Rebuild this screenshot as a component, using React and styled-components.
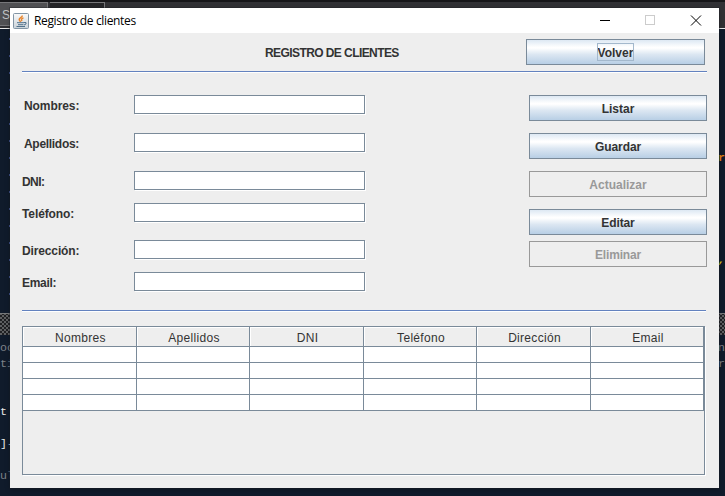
import React from "react";
import styled, { createGlobalStyle } from "styled-components";

const GlobalStyle = createGlobalStyle`
  * { box-sizing: border-box; }
  body { margin: 0; background: #101b2b; overflow: hidden; }
`;

const line = "#7a8a99";

const Desktop = styled.div`
  position: relative;
  width: 725px;
  height: 496px;
  padding: 8px 6px 8px 10px;
  overflow: hidden;
  background: #101b2b;
`;

const Editor = styled.div`
  position: absolute;
  inset: 0;
  font: 11.6px/16px "Liberation Mono", monospace;
`;

const TabStrip = styled.div`
  display: flex;
  height: 29px;
  padding-top: 2px;
  background: linear-gradient(#161619 0 2px, #313135 2px 28px, #e8e8e8 28px);
`;

const EditorTab = styled.div`
  width: ${(p) => p.$width}px;
  height: 24px;
  padding: 5px 2px;
  border: 1px solid #77777a;
  border-left: 0;
  margin-right: 2px;
  background: ${(p) => p.$fill};
  color: #c4c4c4;
  font: 12px/14px "Liberation Sans", sans-serif;
`;

const Splitter = styled.div`
  position: absolute;
  top: 313px;
  left: 0;
  right: 0;
  height: 22px;
  border-top: 1px solid #8a8a8a;
  background:
    conic-gradient(#222 25%, transparent 0) 0 3px / 4px 4px,
    conic-gradient(#222 25%, transparent 0) 2px 5px / 4px 4px,
    #6b6b6b;
  background-size: 4px 4px;
  opacity: 0.85;
`;

const Guide = styled.div`
  position: absolute;
  left: 9px;
  top: 38px;
  width: 1px;
  height: 265px;
  background: repeating-linear-gradient(#4a60a8 0 2px, transparent 2px 17px);
`;

const CodeScrap = styled.span`
  position: absolute;
  left: ${(p) => p.$x}px;
  top: ${(p) => p.$y}px;
  color: ${(p) => p.$color};
  font-style: ${(p) => (p.$italic ? "italic" : "normal")};
  font-weight: ${(p) => (p.$bold ? "bold" : "normal")};
  white-space: pre;
`;

const Window = styled.main`
  position: relative;
  width: 709px;
  height: 480px;
  background: #eeeeee;
  box-shadow: 0 0 0 1px rgba(28, 31, 36, 0.3), 0 2px 5px rgba(0, 0, 0, 0.25);
  color: #333333;
  font: bold 12px/14px "Liberation Sans", Arial, sans-serif;
`;

const TitleBar = styled.header`
  display: flex;
  align-items: center;
  height: 25px;
  padding-left: 3px;
  background: #ffffff;
  color: #000000;
  font: 12px/16px "Open Sans", "Noto Sans", sans-serif;
`;

const Caption = styled.span`
  flex: 1;
  padding-left: 5px;
  letter-spacing: -0.35px;
`;

const WindowControls = styled.svg`
  width: 138px;
  height: 25px;
`;

const Heading = styled.div`
  display: grid;
  grid-template-columns: 504px 179px;
  align-items: center;
  height: 38px;
  padding-left: 12px;
`;

const Title = styled.h1`
  margin: 0;
  padding: 2px 0 0 243px;
  font: inherit;
  letter-spacing: -0.58px;
`;

const Separator = styled.div`
  width: ${(p) => p.$width}px;
  height: 2px;
  margin-left: 12px;
  background: linear-gradient(#6382bf 50%, #ffffff 50%);
`;

const Body = styled.section`
  display: grid;
  grid-template-columns: 507px 178px;
  height: 237px;
  padding: 22px 0 0 12px;
  align-items: start;
`;

const Form = styled.div`
  display: flex;
  flex-direction: column;
`;

const Field = styled.label`
  display: grid;
  grid-template-columns: 112px 232px;
  height: 20px;
  margin-bottom: ${(p) => p.$gap}px;
`;

const FieldLabel = styled.span`
  padding: 4px 0 0 ${(p) => p.$indent}px;
  letter-spacing: ${(p) => p.$tracking}px;
`;

const Input = styled.input`
  width: 231px;
  height: 19px;
  padding: 0 3px;
  border: 1px solid ${line};
  border-radius: 0;
  outline: 0;
  background: #ffffff;
  box-shadow: 1px 1px 0 #ffffff;
`;

const Actions = styled.div`
  display: flex;
  flex-direction: column;
`;

const Button = styled.button`
  display: flex;
  align-items: center;
  justify-content: center;
  width: 100%;
  height: 26px;
  margin: 0 0 ${(p) => p.$gap || 0}px;
  padding: 1px 0 0;
  border: 1px solid ${line};
  background: linear-gradient(#dde8f3 0%, #ffffff 30%, #ffffff 34%, #dce7f2 60%, #b8cfe5 100%);
  color: #333333;
  font: inherit;
  letter-spacing: ${(p) => p.$tracking || 0}px;

  &:disabled {
    border-color: #999999;
    background: #eeeeee;
    color: #999999;
  }
`;

const FocusText = styled.span`
  height: 18px;
  margin-top: -1px;
  padding: 3px 1px 0;
  outline: 1px solid #a3b8cc;
  outline-offset: -1px;
`;

const TablePane = styled.section`
  width: 683px;
  height: 149px;
  margin: 14px 0 0 12px;
  border: 1px solid ${line};
  box-shadow: 1px 1px 0 #ffffff;
`;

const Table = styled.table`
  width: 681px;
  border-collapse: separate;
  border-spacing: 0;
  table-layout: fixed;
`;

const HeaderCell = styled.th`
  height: 20px;
  padding: 2px 0 0 2px;
  border-right: 1px solid ${line};
  border-bottom: 1px solid ${line};
  box-shadow: inset 1px 1px 0 #ffffff;
  font-weight: normal;
  letter-spacing: 0.3px;
`;

const Cell = styled.td`
  height: 16px;
  padding: 0;
  border-right: 1px solid ${line};
  border-bottom: 1px solid ${line};
  background: #ffffff;
`;

const JavaIcon = () => (
  <svg width="16" height="16" viewBox="0 0 16 16" fill="none">
    <defs>
      <linearGradient id="tile" x1="0" y1="0" x2="0" y2="1">
        <stop stopColor="#fafafa" />
        <stop offset="1" stopColor="#c9d2d9" />
      </linearGradient>
    </defs>
    <rect x=".5" y=".5" width="15" height="15" rx="1" fill="url(#tile)" stroke="#8295a5" />
    <path d="M9.300 2.500C9.500 4.500 6 4.700 6.200 6.500C6.400 7.500 7.200 8 7.500 9M10.500 4.800C8.300 5.500 8 6.500 9 8.200" stroke="#e8842c" strokeWidth="1.400" />
    <path d="M4 9.700H11M5 11.700H10.500M3.500 13.500H12M11 9.500H13V11L11 12" stroke="#52728c" />
  </svg>
);

const scraps = [
  { x: 0, y: 340, color: "#7d8188", text: "oc" },
  { x: 0, y: 356, color: "#7d8188", text: "ti" },
  { x: 0, y: 404, color: "#e8e8e8", text: "t" },
  { x: 0, y: 436, color: "#e8e8e8", text: "]-" },
  { x: 0, y: 468, color: "#7d8188", text: "ul" },
  { x: 718, y: 150, color: "#e08010", text: "r", bold: true },
  { x: 718, y: 252, color: "#d8c814", text: ",", italic: true, bold: true },
  { x: 718, y: 340, color: "#7d8188", text: "n" },
  { x: 718, y: 356, color: "#7d8188", text: "r" },
];

const fields = [
  { label: "Nombres:", gap: 18, indent: 2, tracking: -0.08 },
  { label: "Apellidos:", gap: 18, indent: 2, tracking: -0.3 },
  { label: "DNI:", gap: 12, indent: 0, tracking: -0.55 },
  { label: "Teléfono:", gap: 17, indent: 0, tracking: -0.1 },
  { label: "Dirección:", gap: 12, indent: 0, tracking: -0.13 },
  { label: "Email:", gap: 0, indent: 0, tracking: -0.3 },
];

const actions = [
  { label: "Listar", gap: 12 },
  { label: "Guardar", gap: 12, tracking: -0.08 },
  { label: "Actualizar", gap: 12, disabled: true },
  { label: "Editar", gap: 6, tracking: -0.1 },
  { label: "Eliminar", gap: 0, disabled: true, tracking: -0.15 },
];

const columns = [
  { label: "Nombres", width: 114 },
  { label: "Apellidos", width: 113 },
  { label: "DNI", width: 114 },
  { label: "Teléfono", width: 113 },
  { label: "Dirección", width: 114 },
  { label: "Email", width: 113 },
];

export default function App() {
  return (
    <Desktop>
      <GlobalStyle />
      <Editor>
        <TabStrip>
          <EditorTab $width={48} $fill="#515154">S</EditorTab>
          <EditorTab $width={55} $fill="#252528" />
        </TabStrip>
        <Guide />
        <Splitter />
        {scraps.map((s) => (
          <CodeScrap key={`${s.x}-${s.y}`} $x={s.x} $y={s.y} $color={s.color} $italic={s.italic} $bold={s.bold}>
            {s.text}
          </CodeScrap>
        ))}
      </Editor>
      <Window>
        <TitleBar>
          <JavaIcon />
          <Caption>Registro de clientes</Caption>
          <WindowControls viewBox="0 0 138 25" fill="none" shapeRendering="crispEdges">
            <path d="M19 12.500H29" stroke="#000" />
            <rect x="64.500" y="7.500" width="9" height="9" stroke="#ccc" />
            <path d="M110 7.500L120 17.500M120 7.500L110 17.500" stroke="#000" shapeRendering="auto" />
          </WindowControls>
        </TitleBar>
        <Heading>
          <Title>REGISTRO DE CLIENTES</Title>
          <Button><FocusText>Volver</FocusText></Button>
        </Heading>
        <Separator $width={685} />
        <Body>
          <Form>
            {fields.map((f) => (
              <Field key={f.label} $gap={f.gap}>
                <FieldLabel $indent={f.indent} $tracking={f.tracking}>{f.label}</FieldLabel>
                <Input />
              </Field>
            ))}
          </Form>
          <Actions>
            {actions.map((a) => (
              <Button key={a.label} $gap={a.gap} $tracking={a.tracking} disabled={a.disabled}>{a.label}</Button>
            ))}
          </Actions>
        </Body>
        <Separator $width={684} />
        <TablePane>
          <Table>
            <colgroup>
              {columns.map((c) => <col key={c.label} width={c.width} />)}
            </colgroup>
            <thead>
              <tr>{columns.map((c) => <HeaderCell key={c.label}>{c.label}</HeaderCell>)}</tr>
            </thead>
            <tbody>
              {[1, 2, 3, 4].map((row) => (
                <tr key={row}>{columns.map((c) => <Cell key={c.label} />)}</tr>
              ))}
            </tbody>
          </Table>
        </TablePane>
      </Window>
    </Desktop>
  );
}
